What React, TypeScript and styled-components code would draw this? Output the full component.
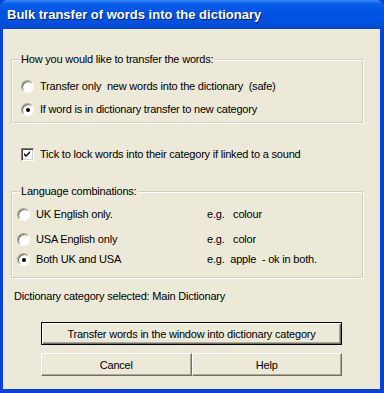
import React, { useState } from 'react';
import styled, { createGlobalStyle } from 'styled-components';

const GlobalStyle = createGlobalStyle`
  html, body { margin: 0; padding: 0; background: #fff; }
  * { box-sizing: border-box; }
`;

const TRANSFER_OPTIONS = [
  { id: 1, text: 'Transfer only\u00a0 new words into the dictionary\u00a0 (safe)' },
  { id: 2, text: 'If word is in dictionary transfer to new category' },
];

const LANGUAGE_OPTIONS = [
  { id: 1, text: 'UK English only.', example: 'e.g.\u00a0\u00a0 colour', gap: 0 },
  { id: 2, text: 'USA English only', example: 'e.g.\u00a0\u00a0 color', gap: 10 },
  { id: 3, text: 'Both UK and USA', example: 'e.g.\u00a0 apple\u00a0 - ok in both.', gap: 5 },
];

function Radio({ checked }: { checked: boolean }) {
  return (
    <RadioCircle>
      {checked && <RadioDot />}
    </RadioCircle>
  );
}

function App() {
  const [transferId, setTransferId] = useState<number>(2);
  const [langId, setLangId] = useState<number>(3);
  const [locked, setLocked] = useState<boolean>(true);
  return (
    <Window>
      <GlobalStyle />
      <TitleBar>Bulk transfer of words into the dictionary</TitleBar>
      <Body>
        <GroupBox $height={64} $top={19}>
          <Legend>How you would like to transfer the words:</Legend>
          <OptionList $indent={9}>
            {TRANSFER_OPTIONS.map((opt, i) =>
              <OptionRow key={opt.id} $gap={i === 0 ? 0 : 8} onClick={() => setTransferId(opt.id)}>
                <Radio checked={transferId === opt.id} />
                <Label>{opt.text}</Label>
              </OptionRow>
            )}
          </OptionList>
        </GroupBox>

        <CheckRow onClick={() => setLocked(!locked)}>
          <CheckBox>
            {locked &&
              <svg width="7" height="7" viewBox="0 0 7 7">
                <path d="M0 2 L2 4 L6 0 L6 2 L2 6 L0 4 Z" fill="#000" />
              </svg>}
          </CheckBox>
          <Label>Tick to lock words into their category if linked to a sound</Label>
        </CheckRow>

        <GroupBox $height={87} $top={15}>
          <Legend>Language combinations:</Legend>
          <OptionList $indent={5}>
            {LANGUAGE_OPTIONS.map(opt =>
              <OptionRow key={opt.id} $gap={opt.gap} onClick={() => setLangId(opt.id)}>
                <Radio checked={langId === opt.id} />
                <LangLabel>{opt.text}</LangLabel>
                <Label>{opt.example}</Label>
              </OptionRow>
            )}
          </OptionList>
        </GroupBox>

        <StatusText>Dictionary category selected: Main Dictionary</StatusText>

        <ButtonArea>
          <DefaultButton>Transfer words in the window into dictionary category</DefaultButton>
          <ButtonRow>
            <Button>Cancel</Button>
            <Button>Help</Button>
          </ButtonRow>
        </ButtonArea>
      </Body>
    </Window>
  );
}

const Window = styled.div`
  width: 384px;
  height: 393px;
  display: flex;
  flex-direction: column;
  background: #0842d4;
  padding: 0 4px 4px 3px;
  font-family: "Liberation Sans", Arial, sans-serif;
  font-size: 11px;
  letter-spacing: -0.2px;
  color: #000;
`;

const TitleBar = styled.div`
  height: 29px;
  flex-shrink: 0;
  margin: 0 -4px 0 -3px;
  padding: 0 0 1px 7px;
  display: flex;
  align-items: center;
  border-radius: 7px 7px 0 0;
  background: linear-gradient(#3a8cf9 0%, #0a5fe8 12%, #0054e3 40%, #0050dd 80%, #0646c8 100%);
  color: #fff;
  font-family: "Liberation Sans", Arial, sans-serif;
  font-weight: bold;
  font-size: 13px;
  letter-spacing: 0;
  text-shadow: 1px 1px 0 #0a1e6e;
`;

const Body = styled.div`
  flex: 1;
  background: #ece9d8;
  display: flex;
  flex-direction: column;
  padding: 30px 17px 0 8px;
`;

const GroupBox = styled.div<{ $height: number; $top: number }>`
  position: relative;
  flex-shrink: 0;
  height: ${p => p.$height}px;
  border: 1px solid #d0d0bf;
  box-shadow: inset 1px 1px 0 #fff, 1px 1px 0 #fff;
  padding-top: ${p => p.$top}px;
`;

const Legend = styled.span`
  position: absolute;
  top: -7px;
  left: 8px;
  padding: 0 2px 0 1px;
  background: #ece9d8;
  line-height: 13px;
`;

const OptionList = styled.div<{ $indent: number }>`
  display: flex;
  flex-direction: column;
  padding-left: ${p => p.$indent}px;
`;

const OptionRow = styled.div<{ $gap: number }>`
  display: flex;
  align-items: center;
  height: 15px;
  gap: 6px;
  margin-top: ${p => p.$gap}px;
  cursor: default;
`;

const RadioCircle = styled.span`
  width: 13px;
  height: 13px;
  flex-shrink: 0;
  border-radius: 50%;
  display: flex;
  align-items: center;
  justify-content: center;
  background: radial-gradient(circle at 65% 65%, #fff 40%, #e6e3d6 100%);
  border: 1px solid;
  border-color: #aca899 #fff #fff #aca899;
  box-shadow: inset 1px 1px 0 #716f64;
`;

const RadioDot = styled.span`
  width: 4px;
  height: 4px;
  border-radius: 50%;
  background: #000;
`;

const Label = styled.span`
  white-space: nowrap;
  line-height: 13px;
`;

const LangLabel = styled(Label)`
  width: 165px;
`;

const CheckRow = styled.div`
  display: flex;
  align-items: center;
  flex-shrink: 0;
  gap: 6px;
  margin: 25px 0 30px 10px;
  height: 13px;
  cursor: default;
`;

const CheckBox = styled.span`
  width: 13px;
  height: 13px;
  display: flex;
  align-items: center;
  justify-content: center;
  background: #fff;
  border: 1px solid;
  border-color: #808080 #fff #fff #808080;
  box-shadow: inset 1px 1px 0 #404040, inset -1px -1px 0 #d4d0c8;
`;

const StatusText = styled.div`
  margin: 12px 0 0 3px;
  line-height: 13px;
`;

const ButtonArea = styled.div`
  display: flex;
  flex-direction: column;
  gap: 8px;
  margin: 19px 0 0 30px;
  width: 301px;
`;

const ButtonRow = styled.div`
  display: flex;
`;

const Button = styled.button`
  flex: 1;
  height: 23px;
  padding: 0;
  font: inherit;
  letter-spacing: inherit;
  color: #000;
  background: #ece9d8;
  border: 1px solid;
  border-color: #fff #716f64 #716f64 #fff;
  box-shadow: inset -1px -1px 0 #aca899;
`;

const DefaultButton = styled(Button)`
  flex: none;
  border: 1px solid #000;
  box-shadow: inset 1px 1px 0 #fff, inset -1px -1px 0 #716f64, inset -2px -2px 0 #aca899;
`;

export default App;
